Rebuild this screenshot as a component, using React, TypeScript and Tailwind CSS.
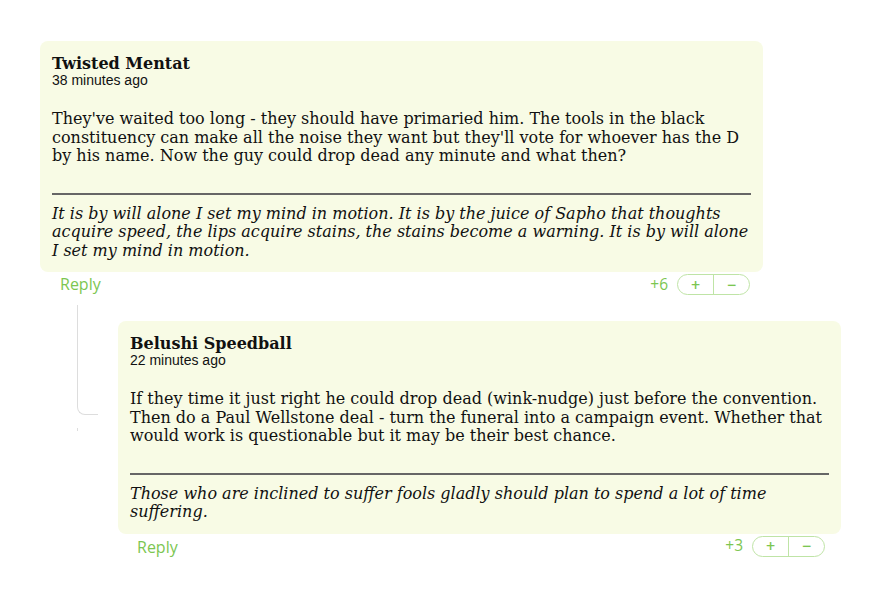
import React from "react";

const serif = "font-['DejaVu_Serif',serif]";

function VoteRow({ score, leftPad, rightPad, textShift }: { score: string; leftPad: string; rightPad: string; textShift: string }) {
  return (
    <div className={`flex items-center justify-between h-[25px] ${leftPad} ${rightPad}`}>
      <span className={`font-['Open_Sans',sans-serif] text-[16px] leading-[20px] text-[#7cc651] ${textShift}`}>Reply</span>
      <div className="flex items-center gap-[9px]">
        <span className="font-['Open_Sans',sans-serif] text-[15.5px] leading-[20px] text-[#7cc651] mb-[2px]">{score}</span>
        <div className="flex h-[21px] w-[73px] rounded-full border border-[#bfe4a6] font-['Open_Sans',sans-serif] text-[16px] font-semibold text-[#7cc651]">
          <div className="flex-1 flex items-center justify-center border-r border-[#bfe4a6] leading-none">+</div>
          <div className="flex-1 flex items-center justify-center leading-none">−</div>
        </div>
      </div>
    </div>
  );
}

function Card({ name, time, body, sig }: { name: string; time: string; body: string; sig: string }) {
  return (
    <div className="w-[723px] rounded-[8px] bg-[#f8fbe5] px-[12px] pt-[14px] pb-[12px] text-[#111]">
      <div className={`${serif} font-bold text-[16px] leading-[18px]`}>{name}</div>
      <div className="font-['Liberation_Sans',sans-serif] text-[14px] leading-[16px] mt-[-1px]">{time}</div>
      <p className={`${serif} text-[16px] leading-[18.5px] mt-[22px]`}>{body}</p>
      <div className="h-[2px] bg-[#666] mt-[27px]" />
      <p className={`${serif} italic text-[16px] leading-[18.5px] mt-[10px]`}>{sig}</p>
    </div>
  );
}

export default function App() {
  return (
    <div className="min-h-[607px] w-[896px] bg-white pt-[41px] pl-[40px]">
      <Card
        name="Twisted Mentat"
        time="38 minutes ago"
        body="They've waited too long - they should have primaried him. The tools in the black constituency can make all the noise they want but they'll vote for whoever has the D by his name. Now the guy could drop dead any minute and what then?"
        sig="It is by will alone I set my mind in motion. It is by the juice of Sapho that thoughts acquire speed, the lips acquire stains, the stains become a warning. It is by will alone I set my mind in motion."
      />
      <div className="w-[723px]">
        <VoteRow score="+6" leftPad="pl-[20px]" rightPad="pr-[13px]" textShift="mb-[2px]" />
      </div>
      <div className="flex mt-[8px]">
        <div className="w-[78px] shrink-0 flex flex-col">
          <div className="ml-[37px] w-[21px] h-[110px] border-l border-b border-[#dddddd] rounded-bl-[8px]" />
          <div className="ml-[37px] mt-[13px] w-px h-[3px] bg-[#dddddd]" />
        </div>
        <div className="mt-[16px]">
          <Card
            name="Belushi Speedball"
            time="22 minutes ago"
            body="If they time it just right he could drop dead (wink-nudge) just before the convention. Then do a Paul Wellstone deal - turn the funeral into a campaign event. Whether that would work is questionable but it may be their best chance."
            sig="Those who are inclined to suffer fools gladly should plan to spend a lot of time suffering."
          />
          <div className="w-[723px]">
            <VoteRow score="+3" leftPad="pl-[19px]" rightPad="pr-[16px]" textShift="mt-[2px]" />
          </div>
        </div>
      </div>
    </div>
  );
}
